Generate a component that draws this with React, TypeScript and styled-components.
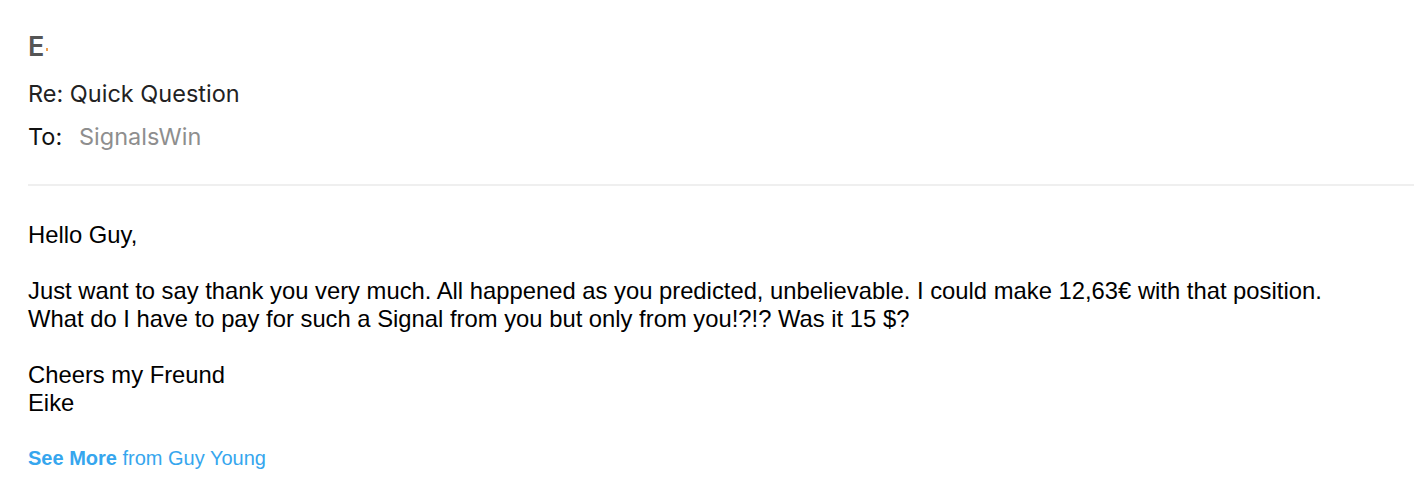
import React from "react";
import styled, { createGlobalStyle } from "styled-components";

const Global = createGlobalStyle`
  html, body { margin: 0; padding: 0; background: #ffffff; }
  body { font-family: "Liberation Sans", Arial, sans-serif; }
`;

const Page = styled.div`
  width: 1414px;
  height: 486px;
  box-sizing: border-box;
  padding: 33px 0 0 28px;
  background: #fff;
  overflow: hidden;
`;

const Header = styled.header`
  display: flex;
  flex-direction: column;
  font-family: Inter, "Noto Sans", sans-serif;
`;

const Sender = styled.div`
  display: flex;
  align-items: center;
  height: 28px;
  font-size: 27px;
  line-height: 28px;
  font-weight: 600;
  color: #555;
`;

const Mark = styled.span`
  display: inline-block;
  width: 2px;
  height: 3px;
  margin-left: 2px;
  margin-top: 4px;
  background: #f0a050;
`;

const Subject = styled.div`
  margin-top: 18px;
  font-size: 23.5px;
  line-height: 30px;
  color: #222;
`;

const ToRow = styled.div`
  display: flex;
  margin-top: 13px;
  font-size: 23.5px;
  line-height: 30px;
`;

const ToLabel = styled.span`
  color: #111;
  width: 51px;
`;

const ToValue = styled.span`
  color: #8e8e8e;
`;

const Divider = styled.hr`
  margin: 32px 0 0 0;
  border: 0;
  height: 2px;
  background: #efefef;
`;

const Body = styled.div`
  margin-top: 35px;
  font-size: 23.8px;
  line-height: 28px;
  color: #000;
`;

const Para = styled.p`
  margin: 0 0 28px 0;
`;

const SeeMore = styled.div`
  font-size: 20px;
  line-height: 28px;
  margin-top: -1px;
  color: #36a6ee;
`;

const Strong = styled.b`
  font-weight: 700;
`;

export default function App() {
  return (
    <>
      <Global />
      <Page>
        <Header>
          <Sender>
            E<Mark />
          </Sender>
          <Subject>Re: Quick Question</Subject>
          <ToRow>
            <ToLabel>To:</ToLabel>
            <ToValue>SignalsWin</ToValue>
          </ToRow>
        </Header>
        <Divider />
        <Body>
          <Para>Hello Guy,</Para>
          <Para>
            Just want to say thank you very much. All happened as you predicted, unbelievable. I could make 12,63€ with that position.
            <br />
            What do I have to pay for such a Signal from you but only from you!?!? Was it 15 $?
          </Para>
          <Para>
            Cheers my Freund
            <br />
            Eike
          </Para>
          <SeeMore>
            <Strong>See More</Strong> from Guy Young
          </SeeMore>
        </Body>
      </Page>
    </>
  );
}
